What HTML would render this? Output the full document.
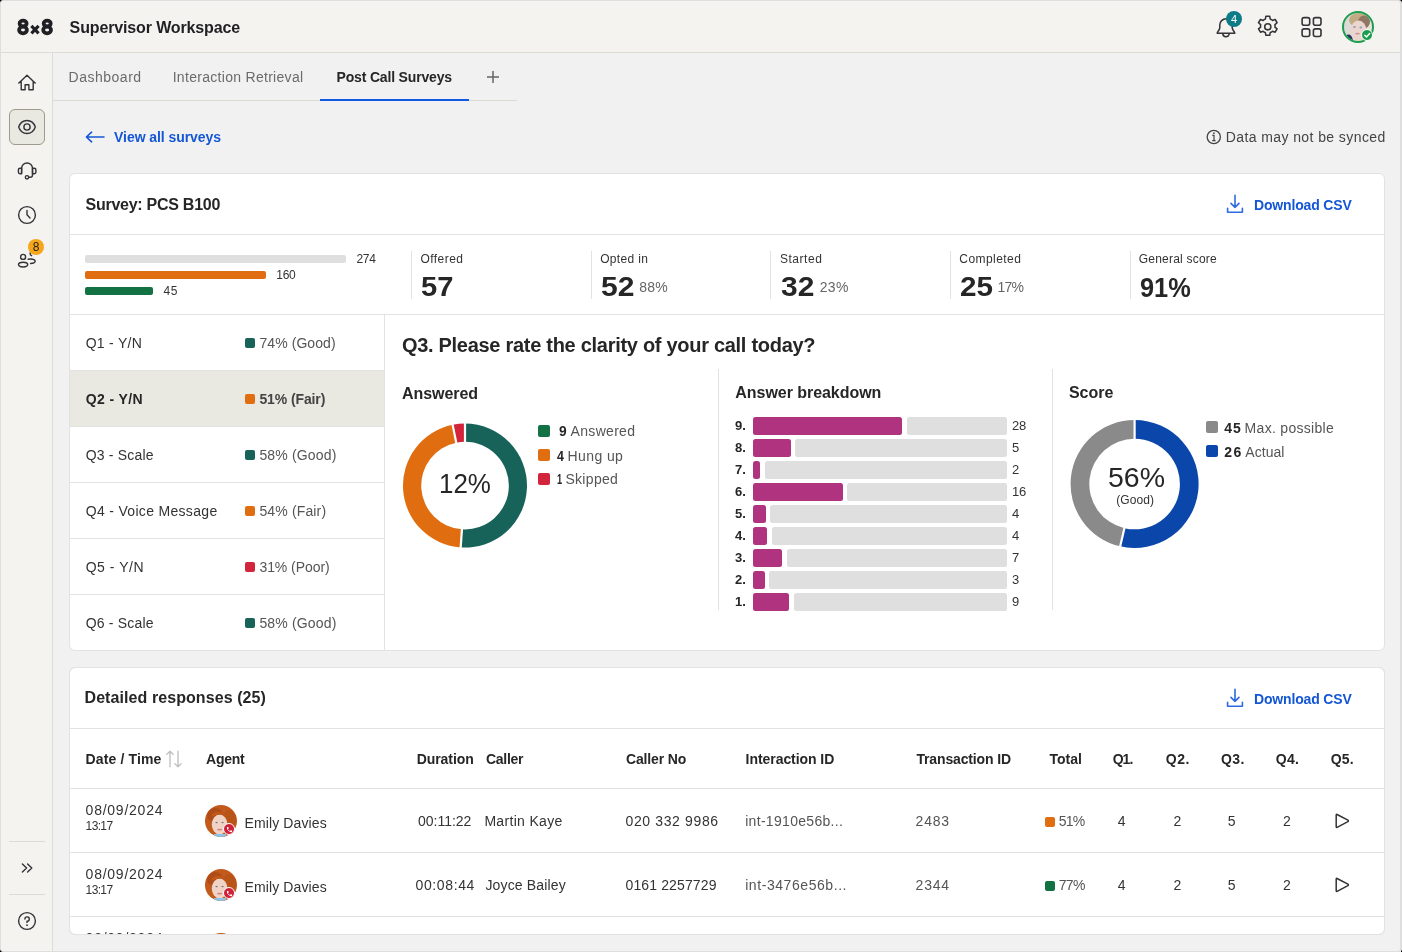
<!DOCTYPE html>
<html><head><meta charset="utf-8"><style>
html,body{margin:0;padding:0;width:1402px;height:952px;overflow:hidden;background:#000;}
body{font-family:"Liberation Sans",sans-serif;position:relative;}
.t{position:absolute;white-space:nowrap;line-height:0;}
.a{position:absolute;}
svg{position:absolute;overflow:visible;}
</style></head><body>
<div class="a" style="left:0;top:0;width:1399px;height:950px;border:1px solid #dedede;border-right-width:2px;border-radius:4px;background:#f1f1f1;overflow:hidden"><div class="a" style="left:0;top:0;width:1399px;height:51px;background:#f4f3ef;border-bottom:1px solid #dddcd4"></div><div class="a" style="left:0;top:52px;width:51px;height:898px;background:#f4f3ef;border-right:1px solid #dddcd4"></div></div>
<svg style="left:0;top:0" width="60" height="50" viewBox="0 0 60 50"><g fill="none" stroke="#1f1f24" stroke-width="3.8"><ellipse cx="23.1" cy="23.5" rx="3.5" ry="2.8"/><ellipse cx="23" cy="30" rx="3.9" ry="3.3"/><ellipse cx="47.2" cy="23.5" rx="3.5" ry="2.8"/><ellipse cx="47.1" cy="30" rx="3.9" ry="3.3"/><path d="M31.4 25.9 L38.6 33.3 M38.6 25.9 L31.4 33.3" stroke-width="3.1"/></g></svg>
<svg style="left:1210px;top:12px" width="32" height="32" viewBox="1210 12 32 32"><path d="M1217.2 33.2 C1217 31.6 1219.6 30.6 1219.8 27.6 V25 A6.2 6.2 0 0 1 1232.2 25 V27.6 C1232.4 30.6 1235 31.6 1234.8 33.2 Z" fill="none" stroke="#333338" stroke-width="1.5" stroke-linejoin="round"/><path d="M1222.8 33.6 A3.2 3.2 0 0 0 1229.2 33.6" fill="none" stroke="#333338" stroke-width="1.5"/></svg>
<div class="a" style="left:1226px;top:11px;width:16px;height:16px;border-radius:50%;background:#0e7c86"></div>
<svg style="left:1255.2px;top:14px" width="25.6" height="25.6" viewBox="0 0 24 24"><path d="M10.2 2.2 h3.6 l0.5 2.6 a7.6 7.6 0 0 1 2.1 1.2 l2.5 -0.9 l1.8 3.1 l-2 1.7 a7.6 7.6 0 0 1 0 2.4 l2 1.7 l-1.8 3.1 l-2.5 -0.9 a7.6 7.6 0 0 1 -2.1 1.2 l-0.5 2.6 h-3.6 l-0.5 -2.6 a7.6 7.6 0 0 1 -2.1 -1.2 l-2.5 0.9 l-1.8 -3.1 l2 -1.7 a7.6 7.6 0 0 1 0 -2.4 l-2 -1.7 l1.8 -3.1 l2.5 0.9 a7.6 7.6 0 0 1 2.1 -1.2 Z" fill="none" stroke="#333338" stroke-width="1.45" stroke-linejoin="round"/><circle cx="12" cy="12" r="2.9" fill="none" stroke="#333338" stroke-width="1.45"/></svg>
<svg style="left:1300px;top:15px" width="24" height="24" viewBox="0 0 24 24"><g fill="none" stroke="#333338" stroke-width="1.6"><rect x="2.1" y="2.6" width="7.6" height="7.6" rx="2"/><rect x="13.4" y="2.6" width="7.6" height="7.6" rx="2"/><rect x="2.1" y="13.9" width="7.6" height="7.6" rx="2"/><rect x="13.4" y="13.9" width="7.6" height="7.6" rx="2"/></g></svg>
<svg style="left:1342px;top:11px" width="32" height="32" viewBox="0 0 32 32"><defs><clipPath id="avc"><circle cx="16" cy="16" r="14.2"/></clipPath></defs><g clip-path="url(#avc)"><rect width="32" height="32" fill="#dddbd7"/><rect x="25" y="0" width="7" height="32" fill="#e9e4de"/><ellipse cx="17" cy="9" rx="10" ry="7" fill="#c2ab82"/><ellipse cx="22" cy="11" rx="6" ry="6.5" fill="#8f7763"/><ellipse cx="16.5" cy="20" rx="8" ry="10.5" fill="#ead6cc"/><ellipse cx="12.5" cy="16" rx="1.4" ry="0.9" fill="#8ea3bb"/><ellipse cx="18.8" cy="16.5" rx="1.4" ry="0.9" fill="#8ea3bb"/><ellipse cx="15.5" cy="22.6" rx="2.4" ry="0.9" fill="#d08f90"/><path d="M2 32 L5 24 C8 22.5 10.5 25 11.5 32Z" fill="#2d3560"/></g><circle cx="16" cy="16" r="15" fill="none" stroke="#1d9d4f" stroke-width="2"/></svg>
<div class="a" style="left:1360.7px;top:28.7px;width:10px;height:10px;border:1.3px solid #fff;border-radius:50%;background:#1a9e4c"></div>
<svg style="left:1362px;top:30px" width="10" height="10" viewBox="0 0 10 10"><path d="M2.8 5.3 L4.5 6.9 L7.6 3.6" fill="none" stroke="#fff" stroke-width="1.5" stroke-linecap="round" stroke-linejoin="round"/></svg>
<svg style="left:0;top:53px" width="53" height="900" viewBox="0 53 53 900"><g fill="none" stroke="#333338" stroke-width="1.4" stroke-linejoin="round"><path d="M18.4 83.6 L27 75.3 L35.6 83.6 M21.2 81.6 V89.8 H25.1 V84.8 H28.9 V89.8 H33.2 V81.6"/></g></svg>
<div class="a" style="left:9px;top:109px;width:34px;height:34px;border:1px solid #9d9b8b;border-radius:6px;background:#e9e8e1"></div>
<svg style="left:0;top:53px" width="53" height="900" viewBox="0 53 53 900"><g fill="none" stroke="#333338" stroke-width="1.4" stroke-linejoin="round" stroke-linecap="round"><path d="M18.7 127 C19.9 123.3 23 120.5 27 120.5 C31 120.5 34.1 123.3 35.3 127 C34.1 130.7 31 133.5 27 133.5 C23 133.5 19.9 130.7 18.7 127Z"/><circle cx="27" cy="127" r="3.1"/><path d="M21.6 173 V168.4 A5.45 5.45 0 0 1 32.5 168.4 V175 C32.5 176.6 31.6 177.3 30.2 177.3 H28.7"/><path d="M21.6 168.2 H20 A1.6 1.6 0 0 0 18.4 169.8 V172.1 A1.6 1.6 0 0 0 20 173.7 H21.6 Z"/><path d="M32.5 168.2 H34.3 A1.6 1.6 0 0 1 35.9 169.8 V172.1 A1.6 1.6 0 0 1 34.3 173.7 H32.5 Z"/><circle cx="27" cy="177.3" r="1.7"/><circle cx="27" cy="215" r="8.4"/><path d="M27 210.4 V214.8 L30 218"/><circle cx="23.1" cy="256.9" r="2.5"/><ellipse cx="23.1" cy="264.6" rx="4.6" ry="2.4"/><path d="M31.6 251.3 A2.4 2.4 0 0 0 31.6 255.7"/><path d="M28.2 259.3 C31 258.6 35.2 259.2 35.2 261.1 C35.2 262.8 32.6 263.5 30.6 263.5"/><path d="M22.4 864 L26.6 868 L22.4 872 M27.6 864 L31.8 868 L27.6 872"/><circle cx="27" cy="921" r="8.4"/><path d="M24.9 919 A2.2 2.2 0 1 1 27 921.3 V922.4"/></g><circle cx="27" cy="925.2" r="0.9" fill="#333338"/></svg>
<div class="a" style="left:28px;top:239px;width:16px;height:16px;border-radius:50%;background:#f5a61a"></div>
<div class="a" style="left:9px;top:841px;width:36px;height:1px;background:#dcdbd3;"></div>
<div class="a" style="left:9px;top:894px;width:36px;height:1px;background:#dcdbd3;"></div>
<svg style="left:480px;top:70px" width="26" height="14" viewBox="480 70 26 14"><path d="M493 71 V83 M487 77 H499" stroke="#666" stroke-width="1.5"/></svg>
<div class="a" style="left:53px;top:100px;width:464px;height:1px;background:#dcdbd3;"></div>
<div class="a" style="left:320px;top:99px;width:149px;height:2px;background:#0f5ae0;"></div>
<svg style="left:80px;top:125px" width="30" height="24" viewBox="80 125 30 24"><path d="M104 137 H86.6 M91.6 132.2 L86.4 137 L91.6 141.8" fill="none" stroke="#1457d6" stroke-width="1.6" stroke-linejoin="round" stroke-linecap="round"/></svg>
<svg style="left:1200px;top:125px" width="30" height="24" viewBox="1200 125 30 24"><circle cx="1213.8" cy="137" r="6.6" fill="none" stroke="#444" stroke-width="1.3"/><path d="M1212.3 135.4 H1214 V140.6 M1212.2 140.6 H1215.6" fill="none" stroke="#444" stroke-width="1.2"/><circle cx="1213.9" cy="133.2" r="0.85" fill="#444"/></svg>
<div class="a" style="left:69px;top:173px;width:1314px;height:476px;border:1px solid #e2e2e2;border-radius:6px;background:#fff"></div>
<div class="a" style="left:70px;top:234px;width:1314px;height:1px;background:#e2e2e2;"></div>
<svg style="left:1220px;top:188px" width="30" height="30" viewBox="1220 188 30 30"><path d="M1235 195.2 V207.4 M1231 203.4 L1235 207.4 L1239 203.4 M1227.6 208.2 V212.2 H1242.4 V208.2" fill="none" stroke="#2e6be0" stroke-width="1.6" stroke-linejoin="round" stroke-linecap="round"/></svg>
<div class="a" style="left:85px;top:255px;width:261px;height:8px;background:#dfdfdf;border-radius:2px"></div>
<div class="a" style="left:85px;top:271px;width:181px;height:8px;background:#e06e10;border-radius:2px"></div>
<div class="a" style="left:85px;top:287px;width:68px;height:8px;background:#137244;border-radius:2px"></div>
<div class="a" style="left:411px;top:251px;width:1px;height:48px;background:#e2e2e2;"></div>
<div class="a" style="left:591px;top:251px;width:1px;height:48px;background:#e2e2e2;"></div>
<div class="a" style="left:770px;top:251px;width:1px;height:48px;background:#e2e2e2;"></div>
<div class="a" style="left:950px;top:251px;width:1px;height:48px;background:#e2e2e2;"></div>
<div class="a" style="left:1130px;top:251px;width:1px;height:48px;background:#e2e2e2;"></div>
<div class="a" style="left:70px;top:314px;width:1314px;height:1px;background:#e2e2e2;"></div>
<div class="a" style="left:70px;top:371px;width:314px;height:55px;background:#e9e8e1;"></div>
<div class="a" style="left:70px;top:370px;width:314px;height:1px;background:#e2e2e2;"></div>
<div class="a" style="left:70px;top:426px;width:314px;height:1px;background:#e2e2e2;"></div>
<div class="a" style="left:70px;top:482px;width:314px;height:1px;background:#e2e2e2;"></div>
<div class="a" style="left:70px;top:538px;width:314px;height:1px;background:#e2e2e2;"></div>
<div class="a" style="left:70px;top:594px;width:314px;height:1px;background:#e2e2e2;"></div>
<div class="a" style="left:384px;top:315px;width:1px;height:335px;background:#e2e2e2;"></div>
<div class="a" style="left:245px;top:338px;width:10px;height:10px;background:#17635a;border-radius:2px"></div>
<div class="a" style="left:245px;top:394px;width:10px;height:10px;background:#e06e10;border-radius:2px"></div>
<div class="a" style="left:245px;top:450px;width:10px;height:10px;background:#17635a;border-radius:2px"></div>
<div class="a" style="left:245px;top:506px;width:10px;height:10px;background:#e06e10;border-radius:2px"></div>
<div class="a" style="left:245px;top:562px;width:10px;height:10px;background:#d2243a;border-radius:2px"></div>
<div class="a" style="left:245px;top:618px;width:10px;height:10px;background:#17635a;border-radius:2px"></div>
<div class="a" style="left:718px;top:369px;width:1px;height:241px;background:#e2e2e2;"></div>
<div class="a" style="left:1052px;top:369px;width:1px;height:241px;background:#e2e2e2;"></div>
<svg style="left:0;top:0" width="1402" height="952" viewBox="0 0 1402 952"><path d="M465.00 423.60 A62 62 0 1 1 460.68 547.45 L461.94 529.29 A43.8 43.8 0 1 0 465.00 441.80 Z" fill="#17635a"/><path d="M460.68 547.45 A62 62 0 0 1 452.64 424.84 L456.27 442.68 A43.8 43.8 0 0 0 461.94 529.29 Z" fill="#e06e10"/><path d="M452.64 424.84 A62 62 0 0 1 465.00 423.60 L465.00 441.80 A43.8 43.8 0 0 0 456.27 442.68 Z" fill="#d2243a"/><line x1="465.00" y1="442.80" x2="465.00" y2="422.60" stroke="#fff" stroke-width="2.2"/><line x1="462.01" y1="528.30" x2="460.61" y2="548.45" stroke="#fff" stroke-width="2.2"/><line x1="456.47" y1="443.66" x2="452.44" y2="423.86" stroke="#fff" stroke-width="2.2"/></svg>
<div class="a" style="left:538px;top:425px;width:12px;height:12px;background:#137244;border-radius:2px"></div>
<div class="a" style="left:538px;top:449px;width:12px;height:12px;background:#e06e10;border-radius:2px"></div>
<div class="a" style="left:538px;top:473px;width:12px;height:12px;background:#d2243a;border-radius:2px"></div>
<div class="a" style="left:752.8px;top:417px;width:149.6px;height:17.6px;background:#b0337f;border-radius:2.5px"></div>
<div class="a" style="left:907px;top:417px;width:100px;height:17.6px;background:#dfdfdf;border-radius:2.5px"></div>
<div class="a" style="left:752.8px;top:439px;width:37.8px;height:17.6px;background:#b0337f;border-radius:2.5px"></div>
<div class="a" style="left:795px;top:439px;width:212px;height:17.6px;background:#dfdfdf;border-radius:2.5px"></div>
<div class="a" style="left:752.8px;top:461px;width:7.6px;height:17.6px;background:#b0337f;border-radius:2.5px"></div>
<div class="a" style="left:765px;top:461px;width:242px;height:17.6px;background:#dfdfdf;border-radius:2.5px"></div>
<div class="a" style="left:752.8px;top:483px;width:89.8px;height:17.6px;background:#b0337f;border-radius:2.5px"></div>
<div class="a" style="left:847px;top:483px;width:160px;height:17.6px;background:#dfdfdf;border-radius:2.5px"></div>
<div class="a" style="left:752.8px;top:505px;width:12.9px;height:17.6px;background:#b0337f;border-radius:2.5px"></div>
<div class="a" style="left:770px;top:505px;width:237px;height:17.6px;background:#dfdfdf;border-radius:2.5px"></div>
<div class="a" style="left:752.8px;top:527px;width:14.7px;height:17.6px;background:#b0337f;border-radius:2.5px"></div>
<div class="a" style="left:772px;top:527px;width:235px;height:17.6px;background:#dfdfdf;border-radius:2.5px"></div>
<div class="a" style="left:752.8px;top:549px;width:29.7px;height:17.6px;background:#b0337f;border-radius:2.5px"></div>
<div class="a" style="left:787px;top:549px;width:220px;height:17.6px;background:#dfdfdf;border-radius:2.5px"></div>
<div class="a" style="left:752.8px;top:571px;width:11.8px;height:17.6px;background:#b0337f;border-radius:2.5px"></div>
<div class="a" style="left:769px;top:571px;width:238px;height:17.6px;background:#dfdfdf;border-radius:2.5px"></div>
<div class="a" style="left:752.8px;top:593px;width:36.7px;height:17.6px;background:#b0337f;border-radius:2.5px"></div>
<div class="a" style="left:794px;top:593px;width:213px;height:17.6px;background:#dfdfdf;border-radius:2.5px"></div>
<svg style="left:0;top:0" width="1402" height="952" viewBox="0 0 1402 952"><path d="M1134.60 420.00 A64 64 0 1 1 1120.20 546.36 L1124.41 528.14 A45.3 45.3 0 1 0 1134.60 438.70 Z" fill="#0b47aa"/><path d="M1120.20 546.36 A64 64 0 0 1 1134.60 420.00 L1134.60 438.70 A45.3 45.3 0 0 0 1124.41 528.14 Z" fill="#8a8a8a"/><line x1="1134.60" y1="439.70" x2="1134.60" y2="419.00" stroke="#fff" stroke-width="2.2"/><line x1="1124.63" y1="527.16" x2="1119.98" y2="547.33" stroke="#fff" stroke-width="2.2"/></svg>
<div class="a" style="left:1206px;top:421px;width:12px;height:12px;background:#8a8a8a;border-radius:2px"></div>
<div class="a" style="left:1206px;top:445px;width:12px;height:12px;background:#0b47aa;border-radius:2px"></div>
<div class="a" style="left:69px;top:667px;width:1314px;height:266px;border:1px solid #e2e2e2;border-radius:6px;background:#fff"></div>
<div class="a" style="left:70px;top:728px;width:1314px;height:1px;background:#e2e2e2;"></div>
<svg style="left:1220px;top:682px" width="30" height="30" viewBox="1220 682 30 30"><path d="M1235 689.2 V701.4 M1231 697.4 L1235 701.4 L1239 697.4 M1227.6 702.2 V706.2 H1242.4 V702.2" fill="none" stroke="#2e6be0" stroke-width="1.6" stroke-linejoin="round" stroke-linecap="round"/></svg>
<div class="a" style="left:70px;top:788px;width:1314px;height:1px;background:#e2e2e2;"></div>
<div class="a" style="left:70px;top:852px;width:1314px;height:1px;background:#e2e2e2;"></div>
<div class="a" style="left:70px;top:916px;width:1314px;height:1px;background:#e2e2e2;"></div>
<svg style="left:160px;top:745px" width="30" height="30" viewBox="160 745 30 30"><g fill="none" stroke="#bdbdbd" stroke-width="1.3" stroke-linecap="round" stroke-linejoin="round"><path d="M170 766.8 V751.2 M166.8 754.4 L170 751.2 L173.2 754.4"/><path d="M178 751.2 V766.8 M174.8 763.6 L178 766.8 L181.2 763.6"/></g></svg>
<svg style="left:204.5px;top:804.6px" width="34" height="34" viewBox="0 0 34 34"><defs><clipPath id="ac0"><circle cx="16" cy="16" r="16"/></clipPath></defs><g clip-path="url(#ac0)"><rect width="34" height="34" fill="#c25a1e"/><path d="M0 0 H34 V8 C30 4 28 6 26 2 Z" fill="#ffffff" opacity="0.0"/><ellipse cx="10" cy="10" rx="8" ry="7" fill="#b04c15"/><ellipse cx="24" cy="14" rx="7" ry="9" fill="#b95418"/><ellipse cx="14.6" cy="19.5" rx="7.8" ry="10" fill="#f0d2c6"/><path d="M7 10 C10 6 18 6 21 11 C17 9 12 9 7 12Z" fill="#c35a1c"/><ellipse cx="11.6" cy="17.6" rx="1.3" ry="0.7" fill="#6e6e76"/><ellipse cx="17.6" cy="17.6" rx="1.3" ry="0.7" fill="#6e6e76"/><ellipse cx="14.6" cy="24.6" rx="2.6" ry="0.9" fill="#d9817a"/><rect x="9" y="29" width="12" height="4" fill="#8fc3e6"/></g></svg>
<div class="a" style="left:223.2px;top:823.2px;width:10px;height:10px;border:1.6px solid #fff;border-radius:50%;background:#cf2039"></div>
<svg style="left:226.4px;top:826.4px" width="7" height="7" viewBox="0 0 24 24"><path d="M6.62 10.79c1.44 2.83 3.76 5.14 6.59 6.59l2.2-2.2c.27-.27.67-.36 1.02-.24 1.12.37 2.33.57 3.57.57.55 0 1 .45 1 1V20c0 .55-.45 1-1 1-9.39 0-17-7.61-17-17 0-.55.45-1 1-1h3.5c.55 0 1 .45 1 1 0 1.25.2 2.45.57 3.57.11.35.03.74-.25 1.02l-2.2 2.2z" fill="#fff"/></svg>
<div class="a" style="left:1044.5px;top:816.5px;width:10px;height:10px;background:#e06e10;border-radius:2px"></div>
<svg style="left:1330px;top:810px" width="24" height="22" viewBox="1330 810 24 22"><path d="M1336.2 815 Q1336.2 814 1337.1 814.5 L1347.9 820.2 Q1348.8 820.9 1347.9 821.6 L1337.1 827.3 Q1336.2 827.8 1336.2 826.8 Z" fill="none" stroke="#333" stroke-width="1.5" stroke-linejoin="round"/></svg>
<svg style="left:204.5px;top:868.6px" width="34" height="34" viewBox="0 0 34 34"><defs><clipPath id="ac1"><circle cx="16" cy="16" r="16"/></clipPath></defs><g clip-path="url(#ac1)"><rect width="34" height="34" fill="#c25a1e"/><path d="M0 0 H34 V8 C30 4 28 6 26 2 Z" fill="#ffffff" opacity="0.0"/><ellipse cx="10" cy="10" rx="8" ry="7" fill="#b04c15"/><ellipse cx="24" cy="14" rx="7" ry="9" fill="#b95418"/><ellipse cx="14.6" cy="19.5" rx="7.8" ry="10" fill="#f0d2c6"/><path d="M7 10 C10 6 18 6 21 11 C17 9 12 9 7 12Z" fill="#c35a1c"/><ellipse cx="11.6" cy="17.6" rx="1.3" ry="0.7" fill="#6e6e76"/><ellipse cx="17.6" cy="17.6" rx="1.3" ry="0.7" fill="#6e6e76"/><ellipse cx="14.6" cy="24.6" rx="2.6" ry="0.9" fill="#d9817a"/><rect x="9" y="29" width="12" height="4" fill="#8fc3e6"/></g></svg>
<div class="a" style="left:223.2px;top:887.2px;width:10px;height:10px;border:1.6px solid #fff;border-radius:50%;background:#cf2039"></div>
<svg style="left:226.4px;top:890.4px" width="7" height="7" viewBox="0 0 24 24"><path d="M6.62 10.79c1.44 2.83 3.76 5.14 6.59 6.59l2.2-2.2c.27-.27.67-.36 1.02-.24 1.12.37 2.33.57 3.57.57.55 0 1 .45 1 1V20c0 .55-.45 1-1 1-9.39 0-17-7.61-17-17 0-.55.45-1 1-1h3.5c.55 0 1 .45 1 1 0 1.25.2 2.45.57 3.57.11.35.03.74-.25 1.02l-2.2 2.2z" fill="#fff"/></svg>
<div class="a" style="left:1044.5px;top:880.5px;width:10px;height:10px;background:#137244;border-radius:2px"></div>
<svg style="left:1330px;top:874px" width="24" height="22" viewBox="1330 874 24 22"><path d="M1336.2 879 Q1336.2 878 1337.1 878.5 L1347.9 884.2 Q1348.8 884.9 1347.9 885.6 L1337.1 891.3 Q1336.2 891.8 1336.2 890.8 Z" fill="none" stroke="#333" stroke-width="1.5" stroke-linejoin="round"/></svg>
<svg style="left:204.5px;top:932.6px" width="34" height="34" viewBox="0 0 34 34"><defs><clipPath id="ac2"><circle cx="16" cy="16" r="16"/></clipPath></defs><g clip-path="url(#ac2)"><rect width="34" height="34" fill="#c25a1e"/><path d="M0 0 H34 V8 C30 4 28 6 26 2 Z" fill="#ffffff" opacity="0.0"/><ellipse cx="10" cy="10" rx="8" ry="7" fill="#b04c15"/><ellipse cx="24" cy="14" rx="7" ry="9" fill="#b95418"/><ellipse cx="14.6" cy="19.5" rx="7.8" ry="10" fill="#f0d2c6"/><path d="M7 10 C10 6 18 6 21 11 C17 9 12 9 7 12Z" fill="#c35a1c"/><ellipse cx="11.6" cy="17.6" rx="1.3" ry="0.7" fill="#6e6e76"/><ellipse cx="17.6" cy="17.6" rx="1.3" ry="0.7" fill="#6e6e76"/><ellipse cx="14.6" cy="24.6" rx="2.6" ry="0.9" fill="#d9817a"/><rect x="9" y="29" width="12" height="4" fill="#8fc3e6"/></g></svg>
<div class="a" style="left:223.2px;top:951.2px;width:10px;height:10px;border:1.6px solid #fff;border-radius:50%;background:#cf2039"></div>
<svg style="left:226.4px;top:954.4px" width="7" height="7" viewBox="0 0 24 24"><path d="M6.62 10.79c1.44 2.83 3.76 5.14 6.59 6.59l2.2-2.2c.27-.27.67-.36 1.02-.24 1.12.37 2.33.57 3.57.57.55 0 1 .45 1 1V20c0 .55-.45 1-1 1-9.39 0-17-7.61-17-17 0-.55.45-1 1-1h3.5c.55 0 1 .45 1 1 0 1.25.2 2.45.57 3.57.11.35.03.74-.25 1.02l-2.2 2.2z" fill="#fff"/></svg>
<div class="a" style="left:1044.5px;top:944.5px;width:10px;height:10px;background:#137244;border-radius:2px"></div>
<svg style="left:1330px;top:938px" width="24" height="22" viewBox="1330 938 24 22"><path d="M1336.2 943 Q1336.2 942 1337.1 942.5 L1347.9 948.2 Q1348.8 948.9 1347.9 949.6 L1337.1 955.3 Q1336.2 955.8 1336.2 954.8 Z" fill="none" stroke="#333" stroke-width="1.5" stroke-linejoin="round"/></svg>
<div class="a" style="left:53px;top:935px;width:1348px;height:17px;background:#f1f1f1;z-index:5"></div>
<div class="a" style="left:0;top:0;width:1399px;height:950px;border:1px solid #dedede;border-right-width:2px;border-radius:4px;z-index:7"></div>
<div class="a" style="left:69px;top:667px;width:1314px;height:266px;border:1px solid #e2e2e2;border-radius:6px;z-index:6"></div>
<div class="a" style="left:0;top:0;width:1402px;height:952px;will-change:transform"><div class="t" style="left:69.60px;top:27.56px;font-size:16px;font-weight:bold;color:#1f1f24;letter-spacing:-0.132px">Supervisor Workspace</div>
<div class="t" style="left:1231.00px;top:18.79px;font-size:11px;font-weight:normal;color:#ffffff;letter-spacing:0.000px">4</div>
<div class="t" style="left:32.70px;top:247.14px;font-size:12px;font-weight:normal;color:#222;letter-spacing:0.000px">8</div>
<div class="t" style="left:68.60px;top:77.15px;font-size:14px;font-weight:normal;color:#6b6b6b;letter-spacing:0.500px">Dashboard</div>
<div class="t" style="left:172.70px;top:77.15px;font-size:14px;font-weight:normal;color:#6b6b6b;letter-spacing:0.295px">Interaction Retrieval</div>
<div class="t" style="left:336.50px;top:77.15px;font-size:14px;font-weight:bold;color:#262626;letter-spacing:-0.168px">Post Call Surveys</div>
<div class="t" style="left:114.10px;top:137.05px;font-size:14px;font-weight:bold;color:#1457d6;letter-spacing:-0.063px">View all surveys</div>
<div class="t" style="left:1225.70px;top:137.15px;font-size:14px;font-weight:normal;color:#444;letter-spacing:0.410px">Data may not be synced</div>
<div class="t" style="left:85.60px;top:204.66px;font-size:16px;font-weight:bold;color:#262626;letter-spacing:-0.269px">Survey: PCS B100</div>
<div class="t" style="left:1254.00px;top:204.65px;font-size:14px;font-weight:bold;color:#1457d6;letter-spacing:-0.156px">Download CSV</div>
<div class="t" style="left:356.40px;top:259.14px;font-size:12px;font-weight:normal;color:#333333;letter-spacing:-0.224px">274</div>
<div class="t" style="left:276.30px;top:275.14px;font-size:12px;font-weight:normal;color:#333333;letter-spacing:-0.324px">160</div>
<div class="t" style="left:163.60px;top:291.14px;font-size:12px;font-weight:normal;color:#333333;letter-spacing:0.426px">45</div>
<div class="t" style="left:420.50px;top:259.14px;font-size:12px;font-weight:normal;color:#333333;letter-spacing:0.445px">Offered</div>
<div class="t" style="left:421.20px;top:287.30px;font-size:28px;font-weight:bold;color:#262626;letter-spacing:0.000px;transform:scaleX(1.0402);transform-origin:0 0">57</div>
<div class="t" style="left:600.20px;top:259.14px;font-size:12px;font-weight:normal;color:#333333;letter-spacing:0.330px">Opted in</div>
<div class="t" style="left:600.50px;top:287.30px;font-size:28px;font-weight:bold;color:#262626;letter-spacing:0.000px;transform:scaleX(1.0729);transform-origin:0 0">52</div>
<div class="t" style="left:639.20px;top:287.15px;font-size:14px;font-weight:normal;color:#666;letter-spacing:0.214px">88%</div>
<div class="t" style="left:779.90px;top:259.14px;font-size:12px;font-weight:normal;color:#333333;letter-spacing:0.547px">Started</div>
<div class="t" style="left:780.50px;top:287.30px;font-size:28px;font-weight:bold;color:#262626;letter-spacing:0.000px;transform:scaleX(1.0696);transform-origin:0 0">32</div>
<div class="t" style="left:819.80px;top:287.15px;font-size:14px;font-weight:normal;color:#666;letter-spacing:0.264px">23%</div>
<div class="t" style="left:959.30px;top:259.14px;font-size:12px;font-weight:normal;color:#333333;letter-spacing:0.443px">Completed</div>
<div class="t" style="left:960.00px;top:287.30px;font-size:28px;font-weight:bold;color:#262626;letter-spacing:0.000px;transform:scaleX(1.0598);transform-origin:0 0">25</div>
<div class="t" style="left:997.50px;top:287.15px;font-size:14px;font-weight:normal;color:#666;letter-spacing:-0.736px">17%</div>
<div class="t" style="left:1138.80px;top:259.14px;font-size:12px;font-weight:normal;color:#333333;letter-spacing:0.209px">General score</div>
<div class="t" style="left:1139.70px;top:287.50px;font-size:28px;font-weight:bold;color:#262626;letter-spacing:0.000px;transform:scaleX(0.9048);transform-origin:0 0">91%</div>
<div class="t" style="left:85.70px;top:343.25px;font-size:14px;font-weight:normal;color:#333333;letter-spacing:0.265px">Q1 - Y/N</div>
<div class="t" style="left:259.40px;top:343.25px;font-size:14px;font-weight:normal;color:#555;letter-spacing:0.087px">74% (Good)</div>
<div class="t" style="left:85.70px;top:399.25px;font-size:14px;font-weight:bold;color:#262626;letter-spacing:0.379px">Q2 - Y/N</div>
<div class="t" style="left:259.40px;top:399.25px;font-size:14px;font-weight:bold;color:#444;letter-spacing:-0.105px">51% (Fair)</div>
<div class="t" style="left:85.70px;top:455.25px;font-size:14px;font-weight:normal;color:#333333;letter-spacing:0.189px">Q3 - Scale</div>
<div class="t" style="left:259.40px;top:455.25px;font-size:14px;font-weight:normal;color:#555;letter-spacing:0.164px">58% (Good)</div>
<div class="t" style="left:85.70px;top:511.25px;font-size:14px;font-weight:normal;color:#333333;letter-spacing:0.319px">Q4 - Voice Message</div>
<div class="t" style="left:259.40px;top:511.25px;font-size:14px;font-weight:normal;color:#555;letter-spacing:0.146px">54% (Fair)</div>
<div class="t" style="left:85.70px;top:567.25px;font-size:14px;font-weight:normal;color:#333333;letter-spacing:0.522px">Q5 - Y/N</div>
<div class="t" style="left:259.40px;top:567.25px;font-size:14px;font-weight:normal;color:#555;letter-spacing:-0.049px">31% (Poor)</div>
<div class="t" style="left:85.70px;top:623.25px;font-size:14px;font-weight:normal;color:#333333;letter-spacing:0.189px">Q6 - Scale</div>
<div class="t" style="left:259.40px;top:623.25px;font-size:14px;font-weight:normal;color:#555;letter-spacing:0.164px">58% (Good)</div>
<div class="t" style="left:401.90px;top:345.37px;font-size:20px;font-weight:bold;color:#262626;letter-spacing:-0.287px">Q3. Please rate the clarity of your call today?</div>
<div class="t" style="left:401.90px;top:393.86px;font-size:16px;font-weight:bold;color:#262626;letter-spacing:-0.042px">Answered</div>
<div class="t" style="left:735.30px;top:393.36px;font-size:16px;font-weight:bold;color:#262626;letter-spacing:-0.042px">Answer breakdown</div>
<div class="t" style="left:1068.90px;top:393.36px;font-size:16px;font-weight:bold;color:#262626;letter-spacing:0.007px">Score</div>
<div class="t" style="left:438.95px;top:484.30px;font-size:28px;font-weight:normal;color:#262626;letter-spacing:0.000px;transform:scaleX(0.9258);transform-origin:0 0">12%</div>
<div class="t" style="left:558.50px;top:431.45px;font-size:14px;font-weight:bold;color:#262626;letter-spacing:0.000px;transform:scaleX(0.9875);transform-origin:0 0">9</div>
<div class="t" style="left:570.60px;top:431.45px;font-size:14px;font-weight:normal;color:#555;letter-spacing:0.304px">Answered</div>
<div class="t" style="left:556.70px;top:455.65px;font-size:14px;font-weight:bold;color:#262626;letter-spacing:0.000px;transform:scaleX(0.8875);transform-origin:0 0">4</div>
<div class="t" style="left:567.50px;top:455.65px;font-size:14px;font-weight:normal;color:#555;letter-spacing:0.409px">Hung up</div>
<div class="t" style="left:556.70px;top:479.45px;font-size:14px;font-weight:bold;color:#262626;letter-spacing:0.000px;transform:scaleX(0.6625);transform-origin:0 0">1</div>
<div class="t" style="left:565.40px;top:479.45px;font-size:14px;font-weight:normal;color:#555;letter-spacing:0.316px">Skipped</div>
<div class="t" style="left:735.00px;top:425.50px;font-size:13px;font-weight:bold;color:#262626;letter-spacing:0.000px">9.</div>
<div class="t" style="left:1011.90px;top:425.50px;font-size:13px;font-weight:normal;color:#333333;letter-spacing:0.000px">28</div>
<div class="t" style="left:735.00px;top:447.50px;font-size:13px;font-weight:bold;color:#262626;letter-spacing:0.000px">8.</div>
<div class="t" style="left:1011.90px;top:447.50px;font-size:13px;font-weight:normal;color:#333333;letter-spacing:0.000px">5</div>
<div class="t" style="left:735.00px;top:469.50px;font-size:13px;font-weight:bold;color:#262626;letter-spacing:0.000px">7.</div>
<div class="t" style="left:1011.90px;top:469.50px;font-size:13px;font-weight:normal;color:#333333;letter-spacing:0.000px">2</div>
<div class="t" style="left:735.00px;top:491.50px;font-size:13px;font-weight:bold;color:#262626;letter-spacing:0.000px">6.</div>
<div class="t" style="left:1011.90px;top:491.50px;font-size:13px;font-weight:normal;color:#333333;letter-spacing:0.000px">16</div>
<div class="t" style="left:735.00px;top:513.50px;font-size:13px;font-weight:bold;color:#262626;letter-spacing:0.000px">5.</div>
<div class="t" style="left:1011.90px;top:513.50px;font-size:13px;font-weight:normal;color:#333333;letter-spacing:0.000px">4</div>
<div class="t" style="left:735.00px;top:535.50px;font-size:13px;font-weight:bold;color:#262626;letter-spacing:0.000px">4.</div>
<div class="t" style="left:1011.90px;top:535.50px;font-size:13px;font-weight:normal;color:#333333;letter-spacing:0.000px">4</div>
<div class="t" style="left:735.00px;top:557.50px;font-size:13px;font-weight:bold;color:#262626;letter-spacing:0.000px">3.</div>
<div class="t" style="left:1011.90px;top:557.50px;font-size:13px;font-weight:normal;color:#333333;letter-spacing:0.000px">7</div>
<div class="t" style="left:735.00px;top:579.50px;font-size:13px;font-weight:bold;color:#262626;letter-spacing:0.000px">2.</div>
<div class="t" style="left:1011.90px;top:579.50px;font-size:13px;font-weight:normal;color:#333333;letter-spacing:0.000px">3</div>
<div class="t" style="left:735.00px;top:601.50px;font-size:13px;font-weight:bold;color:#262626;letter-spacing:0.000px">1.</div>
<div class="t" style="left:1011.90px;top:601.50px;font-size:13px;font-weight:normal;color:#333333;letter-spacing:0.000px">9</div>
<div class="t" style="left:1107.88px;top:477.80px;font-size:28px;font-weight:normal;color:#262626;letter-spacing:0.000px;transform:scaleX(1.0176);transform-origin:0 0">56%</div>
<div class="t" style="left:1116.20px;top:500.24px;font-size:12px;font-weight:normal;color:#333333;letter-spacing:0.090px">(Good)</div>
<div class="t" style="left:1224.30px;top:427.55px;font-size:14px;font-weight:bold;color:#262626;letter-spacing:0.914px">45</div>
<div class="t" style="left:1244.60px;top:427.55px;font-size:14px;font-weight:normal;color:#555;letter-spacing:0.299px">Max. possible</div>
<div class="t" style="left:1224.30px;top:451.55px;font-size:14px;font-weight:bold;color:#262626;letter-spacing:1.414px">26</div>
<div class="t" style="left:1245.30px;top:451.55px;font-size:14px;font-weight:normal;color:#555;letter-spacing:0.040px">Actual</div>
<div class="t" style="left:84.50px;top:698.46px;font-size:16px;font-weight:bold;color:#262626;letter-spacing:0.077px">Detailed responses (25)</div>
<div class="t" style="left:1254.00px;top:698.65px;font-size:14px;font-weight:bold;color:#1457d6;letter-spacing:-0.156px">Download CSV</div>
<div class="t" style="left:85.50px;top:759.05px;font-size:14px;font-weight:bold;color:#262626;letter-spacing:0.145px">Date / Time</div>
<div class="t" style="left:206.10px;top:759.05px;font-size:14px;font-weight:bold;color:#262626;letter-spacing:-0.275px">Agent</div>
<div class="t" style="left:416.70px;top:759.05px;font-size:14px;font-weight:bold;color:#262626;letter-spacing:-0.071px">Duration</div>
<div class="t" style="left:486.00px;top:759.05px;font-size:14px;font-weight:bold;color:#262626;letter-spacing:-0.292px">Caller</div>
<div class="t" style="left:626.00px;top:759.05px;font-size:14px;font-weight:bold;color:#262626;letter-spacing:-0.139px">Caller No</div>
<div class="t" style="left:745.60px;top:759.05px;font-size:14px;font-weight:bold;color:#262626;letter-spacing:-0.057px">Interaction ID</div>
<div class="t" style="left:916.40px;top:759.05px;font-size:14px;font-weight:bold;color:#262626;letter-spacing:-0.143px">Transaction ID</div>
<div class="t" style="left:1049.50px;top:759.05px;font-size:14px;font-weight:bold;color:#262626;letter-spacing:-0.003px">Total</div>
<div class="t" style="left:1112.70px;top:759.05px;font-size:14px;font-weight:bold;color:#262626;letter-spacing:-0.988px">Q1.</div>
<div class="t" style="left:1165.80px;top:759.05px;font-size:14px;font-weight:bold;color:#262626;letter-spacing:0.462px">Q2.</div>
<div class="t" style="left:1221.00px;top:759.05px;font-size:14px;font-weight:bold;color:#262626;letter-spacing:0.362px">Q3.</div>
<div class="t" style="left:1275.70px;top:759.05px;font-size:14px;font-weight:bold;color:#262626;letter-spacing:0.312px">Q4.</div>
<div class="t" style="left:1330.70px;top:759.05px;font-size:14px;font-weight:bold;color:#262626;letter-spacing:0.212px">Q5.</div>
<div class="t" style="left:85.60px;top:809.85px;font-size:14px;font-weight:normal;color:#333333;letter-spacing:0.758px">08/09/2024</div>
<div class="t" style="left:85.60px;top:826.24px;font-size:12px;font-weight:normal;color:#333333;letter-spacing:-0.639px">13:17</div>
<div class="t" style="left:244.60px;top:823.15px;font-size:14px;font-weight:normal;color:#333333;letter-spacing:0.109px">Emily Davies</div>
<div class="t" style="left:418.10px;top:821.35px;font-size:14px;font-weight:normal;color:#333333;letter-spacing:-0.024px">00:11:22</div>
<div class="t" style="left:484.40px;top:821.35px;font-size:14px;font-weight:normal;color:#333333;letter-spacing:0.319px">Martin Kaye</div>
<div class="t" style="left:625.50px;top:821.35px;font-size:14px;font-weight:normal;color:#333333;letter-spacing:0.631px">020 332 9986</div>
<div class="t" style="left:745.20px;top:821.35px;font-size:14px;font-weight:normal;color:#555;letter-spacing:0.306px">int-1910e56b...</div>
<div class="t" style="left:915.60px;top:821.35px;font-size:14px;font-weight:normal;color:#555;letter-spacing:0.747px">2483</div>
<div class="t" style="left:1058.70px;top:821.35px;font-size:14px;font-weight:normal;color:#555;letter-spacing:-0.786px">51%</div>
<div class="t" style="left:1117.70px;top:821.35px;font-size:14px;font-weight:normal;color:#333333;letter-spacing:0.000px">4</div>
<div class="t" style="left:1173.40px;top:821.35px;font-size:14px;font-weight:normal;color:#333333;letter-spacing:0.000px">2</div>
<div class="t" style="left:1227.70px;top:821.35px;font-size:14px;font-weight:normal;color:#333333;letter-spacing:0.000px">5</div>
<div class="t" style="left:1283.00px;top:821.35px;font-size:14px;font-weight:normal;color:#333333;letter-spacing:0.000px">2</div>
<div class="t" style="left:85.60px;top:873.85px;font-size:14px;font-weight:normal;color:#333333;letter-spacing:0.758px">08/09/2024</div>
<div class="t" style="left:85.60px;top:890.24px;font-size:12px;font-weight:normal;color:#333333;letter-spacing:-0.639px">13:17</div>
<div class="t" style="left:244.60px;top:887.15px;font-size:14px;font-weight:normal;color:#333333;letter-spacing:0.109px">Emily Davies</div>
<div class="t" style="left:415.50px;top:885.35px;font-size:14px;font-weight:normal;color:#333333;letter-spacing:0.627px">00:08:44</div>
<div class="t" style="left:485.40px;top:885.35px;font-size:14px;font-weight:normal;color:#333333;letter-spacing:0.164px">Joyce Bailey</div>
<div class="t" style="left:625.50px;top:885.35px;font-size:14px;font-weight:normal;color:#333333;letter-spacing:0.132px">0161 2257729</div>
<div class="t" style="left:745.20px;top:885.35px;font-size:14px;font-weight:normal;color:#555;letter-spacing:0.563px">int-3476e56b...</div>
<div class="t" style="left:915.60px;top:885.35px;font-size:14px;font-weight:normal;color:#555;letter-spacing:0.747px">2344</div>
<div class="t" style="left:1058.70px;top:885.35px;font-size:14px;font-weight:normal;color:#555;letter-spacing:-0.636px">77%</div>
<div class="t" style="left:1117.70px;top:885.35px;font-size:14px;font-weight:normal;color:#333333;letter-spacing:0.000px">4</div>
<div class="t" style="left:1173.40px;top:885.35px;font-size:14px;font-weight:normal;color:#333333;letter-spacing:0.000px">2</div>
<div class="t" style="left:1227.70px;top:885.35px;font-size:14px;font-weight:normal;color:#333333;letter-spacing:0.000px">5</div>
<div class="t" style="left:1283.00px;top:885.35px;font-size:14px;font-weight:normal;color:#333333;letter-spacing:0.000px">2</div>
<div class="t" style="left:85.60px;top:937.85px;font-size:14px;font-weight:normal;color:#333333;letter-spacing:0.758px">08/09/2024</div>
<div class="t" style="left:85.60px;top:954.24px;font-size:12px;font-weight:normal;color:#333333;letter-spacing:-0.639px">13:17</div>
<div class="t" style="left:244.60px;top:951.15px;font-size:14px;font-weight:normal;color:#333333;letter-spacing:0.109px">Emily Davies</div>
<div class="t" style="left:415.50px;top:949.35px;font-size:14px;font-weight:normal;color:#333333;letter-spacing:0.627px">00:08:44</div>
<div class="t" style="left:485.40px;top:949.35px;font-size:14px;font-weight:normal;color:#333333;letter-spacing:0.164px">Joyce Bailey</div>
<div class="t" style="left:625.50px;top:949.35px;font-size:14px;font-weight:normal;color:#333333;letter-spacing:0.132px">0161 2257729</div>
<div class="t" style="left:745.20px;top:949.35px;font-size:14px;font-weight:normal;color:#555;letter-spacing:0.563px">int-3476e56b...</div>
<div class="t" style="left:915.60px;top:949.35px;font-size:14px;font-weight:normal;color:#555;letter-spacing:0.747px">2344</div>
<div class="t" style="left:1058.70px;top:949.35px;font-size:14px;font-weight:normal;color:#555;letter-spacing:-0.636px">77%</div>
<div class="t" style="left:1117.70px;top:949.35px;font-size:14px;font-weight:normal;color:#333333;letter-spacing:0.000px">4</div>
<div class="t" style="left:1173.40px;top:949.35px;font-size:14px;font-weight:normal;color:#333333;letter-spacing:0.000px">2</div>
<div class="t" style="left:1227.70px;top:949.35px;font-size:14px;font-weight:normal;color:#333333;letter-spacing:0.000px">5</div>
<div class="t" style="left:1283.00px;top:949.35px;font-size:14px;font-weight:normal;color:#333333;letter-spacing:0.000px">2</div></div>
</body></html>
